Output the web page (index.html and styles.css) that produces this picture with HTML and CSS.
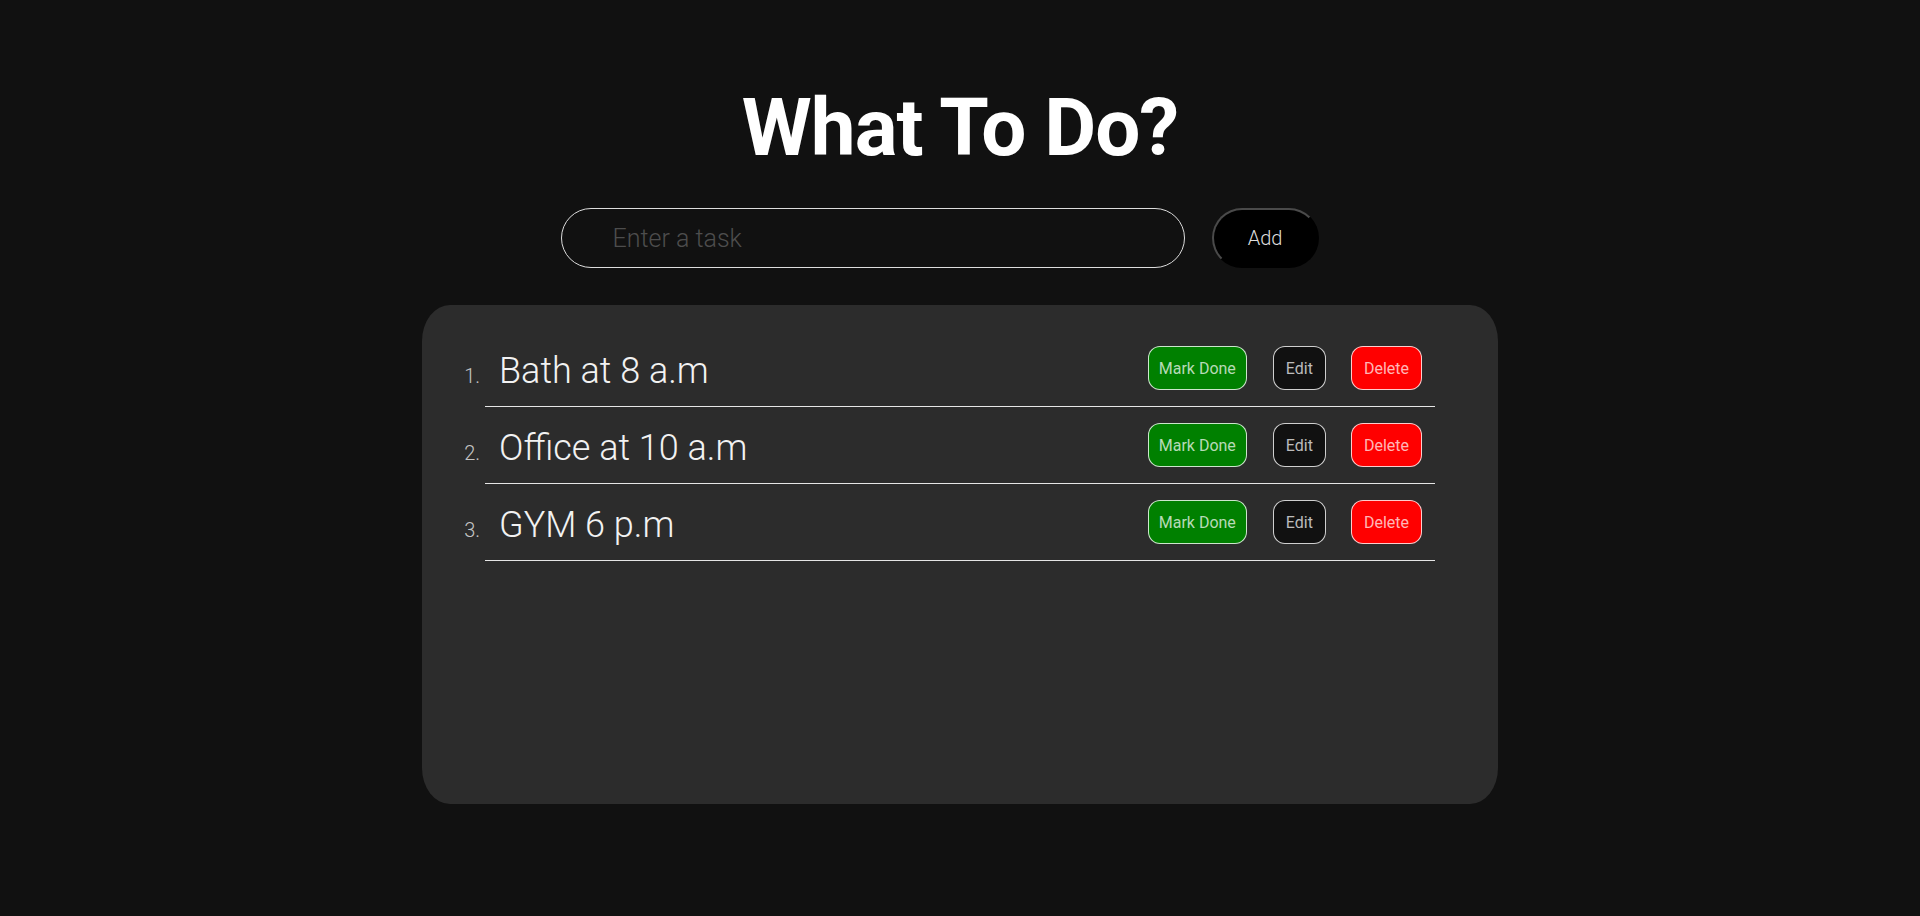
FILE: index.html
```html
<!DOCTYPE html>
<html lang="en">
<head>
<meta charset="utf-8">
<title>What To Do?</title>
<link rel="stylesheet" href="styles.css">
</head>
<body>
<main class="app">
  <h1 class="title">What To Do?</h1>
  <form class="task-form">
    <input class="task-input" type="text" placeholder="Enter a task">
    <button class="add-btn" type="button">Add</button>
  </form>
  <section class="card">
    <ol class="task-list">
      <li class="task">
        <div class="task-row">
          <span class="task-text">Bath at 8 a.m</span>
          <button class="btn btn-done" type="button">Mark Done</button>
          <button class="btn btn-edit" type="button">Edit</button>
          <button class="btn btn-delete" type="button">Delete</button>
        </div>
      </li>
      <li class="task">
        <div class="task-row">
          <span class="task-text">Office at 10 a.m</span>
          <button class="btn btn-done" type="button">Mark Done</button>
          <button class="btn btn-edit" type="button">Edit</button>
          <button class="btn btn-delete" type="button">Delete</button>
        </div>
      </li>
      <li class="task">
        <div class="task-row">
          <span class="task-text">GYM 6 p.m</span>
          <button class="btn btn-done" type="button">Mark Done</button>
          <button class="btn btn-edit" type="button">Edit</button>
          <button class="btn btn-delete" type="button">Delete</button>
        </div>
      </li>
    </ol>
  </section>
</main>
</body>
</html>
```

FILE: styles.css
```css
* { box-sizing: border-box; }

html, body {
  margin: 0;
  padding: 0;
  background: #111111;
  color: #ffffff;
  font-family: Roboto, "Liberation Sans", sans-serif;
}

.app {
  display: flex;
  flex-direction: column;
  align-items: center;
  padding-top: 88px;
}

.title {
  margin: 0;
  font-size: 80px;
  line-height: 80px;
  font-weight: 700;
  letter-spacing: -1px;
  color: #ffffff;
}

.task-form {
  display: flex;
  align-items: center;
  margin-top: 40px;
}

.task-input {
  width: 624px;
  height: 60px;
  border: 1px solid #dddddd;
  border-radius: 30px;
  background: #111111;
  color: #dddddd;
  padding: 0 0 0 51px;
  font-family: Roboto, "Liberation Sans", sans-serif;
  font-size: 25px;
  font-weight: 300;
  outline: none;
}

.task-input::placeholder {
  color: #4d4d4d;
}

.add-btn {
  width: 107px;
  height: 60px;
  margin: 0 41px 0 27px;
  border: 2px solid;
  border-color: #4a4a4a #000000 #000000 #4a4a4a;
  border-radius: 30px;
  background: #000000;
  color: #dddddd;
  font-family: Roboto, "Liberation Sans", sans-serif;
  font-size: 20px;
  font-weight: 300;
}

.card {
  width: 1076px;
  height: 499px;
  margin-top: 37px;
  background: #2c2c2c;
  border-radius: 28px / 36px;
}

.task-list {
  margin: 0;
  padding: 25px 63px 0 63px;
}

.task {
  border-bottom: 1px solid #e6e6e6;
  color: #c4c4c4;
}

.task::marker {
  font-size: 20px;
  font-weight: 300;
  color: #c4c4c4;
}

.task-row {
  display: flex;
  align-items: center;
  height: 76px;
}

.task-text {
  margin-left: 14px;
  padding-top: 5px;
  font-size: 36px;
  font-weight: 300;
  color: #f2f2f2;
}

.btn {
  height: 44px;
  padding: 0 10px;
  border-radius: 12px;
  border: 1px solid rgba(255, 255, 255, 0.8);
  color: rgba(255, 255, 255, 0.72);
  font-family: Roboto, "Liberation Sans", sans-serif;
  font-size: 16px;
  font-weight: 400;
}

.btn-done {
  margin-left: auto;
  background: #008000;
}

.btn-edit {
  margin-left: 26px;
  padding: 0 12px;
  background: #111111;
}

.btn-delete {
  margin-left: 25px;
  margin-right: 13px;
  padding: 0 12px;
  background: #ff0000;
}
```
